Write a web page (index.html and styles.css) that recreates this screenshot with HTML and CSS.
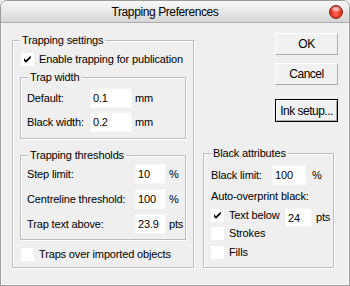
FILE: index.html
```html
<!DOCTYPE html>
<html>
<head>
<meta charset="utf-8">
<title>Trapping Preferences</title>
<link rel="stylesheet" href="styles.css">
</head>
<body>
<div class="window">
  <div class="titlebar">
    <span class="title">Trapping Preferences</span>
    <span class="close"></span>
  </div>
  <div class="content">
    <div class="group main">
      <span class="legend">Trapping settings</span>
      <div class="check-row first-check">
        <span class="cb"><svg viewBox="0 0 13 13" width="13" height="13"><path d="M3 5.3 L5 7.3 L9.8 2.5 L9.8 5 L5 9.8 L3 7.8 Z" fill="#000"/></svg></span>
        <span>Enable trapping for publication</span>
      </div>
      <div class="group sub width-group">
        <span class="legend">Trap width</span>
        <div class="field-row first-row">
          <span class="lbl lbl-w">Default:</span>
          <input class="inp inp-w" type="text" value="0.1" readonly>
          <span class="unit">mm</span>
        </div>
        <div class="field-row next-row">
          <span class="lbl lbl-w">Black width:</span>
          <input class="inp inp-w" type="text" value="0.2" readonly>
          <span class="unit">mm</span>
        </div>
      </div>
      <div class="group sub thresh-group">
        <span class="legend">Trapping thresholds</span>
        <div class="field-row thresh-first">
          <span class="lbl lbl-t">Step limit:</span>
          <input class="inp inp-t" type="text" value="10" readonly>
          <span class="unit">%</span>
        </div>
        <div class="field-row thresh-next">
          <span class="lbl lbl-t">Centreline threshold:</span>
          <input class="inp inp-t" type="text" value="100" readonly>
          <span class="unit">%</span>
        </div>
        <div class="field-row thresh-next">
          <span class="lbl lbl-t">Trap text above:</span>
          <input class="inp inp-t" type="text" value="23.9" readonly>
          <span class="unit">pts</span>
        </div>
      </div>
      <div class="check-row traps-check">
        <span class="cb"></span>
        <span>Traps over imported objects</span>
      </div>
    </div>
    <div class="right">
      <div class="btn">OK</div>
      <div class="btn btn-cancel">Cancel</div>
      <div class="btn btn-default">Ink setup...</div>
      <div class="group black-group">
        <span class="legend">Black attributes</span>
        <div class="field-row black-first">
          <span class="lbl lbl-b">Black limit:</span>
          <input class="inp inp-b" type="text" value="100" readonly>
          <span class="unit unit-b">%</span>
        </div>
        <div class="auto-label">Auto-overprint black:</div>
        <div class="text-below-row">
          <span class="cb cb-tb"><svg viewBox="0 0 13 13" width="13" height="13"><path d="M3 5.3 L5 7.3 L9.8 2.5 L9.8 5 L5 9.8 L3 7.8 Z" fill="#000"/></svg></span>
          <span class="tb-label">Text below</span>
          <input class="inp inp-tb" type="text" value="24" readonly>
          <span class="unit unit-tb">pts</span>
        </div>
        <div class="check-row black-check">
          <span class="cb"></span>
          <span>Strokes</span>
        </div>
        <div class="check-row black-check fills-check">
          <span class="cb"></span>
          <span>Fills</span>
        </div>
      </div>
    </div>
  </div>
</div>
</body>
</html>
```
FILE: styles.css
```css
* {
  box-sizing: border-box;
  margin: 0;
  padding: 0;
}

html, body {
  width: 350px;
  height: 286px;
  overflow: hidden;
}

body {
  font-family: "Liberation Sans", Arial, sans-serif;
  font-size: 11px;
  letter-spacing: -0.15px;
  color: #000;
  background: #efefef;
}

.window {
  width: 350px;
  height: 286px;
  border: 1px solid #9c9c9c;
  border-radius: 7px 7px 0 0;
  background: #efefef;
  display: flex;
  flex-direction: column;
  overflow: hidden;
  box-shadow: inset 1px 0 0 #fafafa, inset -1px -1px 0 #fafafa;
}

.titlebar {
  height: 22px;
  flex: none;
  display: flex;
  align-items: center;
  background: linear-gradient(#f9f9f9, #e9e9e9 45%, #d6d6d6);
  border-bottom: 1px solid #ababab;
}

.title {
  flex: 1;
  text-align: center;
  font-size: 12px;
  letter-spacing: -0.4px;
  line-height: 14px;
}

.close {
  width: 14px;
  height: 14px;
  margin-right: 6px;
  border-radius: 50%;
  border: 1px solid #8e1c12;
  background:
    radial-gradient(ellipse 55% 35% at 50% 25%, rgba(255,255,255,0.85), rgba(255,255,255,0) 100%),
    radial-gradient(circle at 50% 70%, #ff6a50 0%, #e0281a 50%, #a8120a 100%);
}

.content {
  flex: 1;
  display: flex;
  gap: 9px;
  padding: 10px 0 0 11px;
}

.group {
  border: 1px solid #bdbdbd;
  box-shadow: 1px 1px 0 #fff, inset 1px 1px 0 #fff;
  background: #efefef;
}

.legend {
  display: block;
  width: fit-content;
  height: 13px;
  line-height: 13px;
  margin: -7px 0 0 7px;
  padding: 0 2px;
  background: #efefef;
}

.main {
  width: 182px;
  height: 228px;
  margin-top: 7px;
  flex: none;
}

.check-row {
  display: flex;
  align-items: center;
  height: 13px;
  line-height: 13px;
}

.main > .check-row {
  margin-left: 8px;
}

.first-check {
  margin-top: 6px;
}

.traps-check {
  margin-top: 8px;
}

.cb {
  width: 13px;
  height: 13px;
  flex: none;
  background: #fff;
  margin-right: 5px;
  display: block;
}

.cb svg {
  display: block;
}

.sub {
  margin: 0 7px;
}

.width-group {
  margin-top: 11px;
  height: 62px;
}

.thresh-group {
  margin-top: 16px;
  height: 85px;
}

.field-row {
  display: flex;
  align-items: center;
  height: 20px;
  margin-left: 6px;
}

.first-row {
  margin-top: 4px;
}

.next-row {
  margin-top: 4px;
}

.thresh-first {
  margin-top: 2px;
}

.thresh-next {
  margin-top: 5px;
}

.lbl {
  flex: none;
  white-space: nowrap;
}

.lbl-w {
  width: 63px;
}

.lbl-t {
  width: 108px;
}

.lbl-b {
  width: 61px;
}

.inp {
  height: 20px;
  border: 1px solid #f6f6f6;
  background: #fff;
  font-family: inherit;
  font-size: 11px;
  letter-spacing: -0.15px;
  color: #000;
  padding: 0 0 0 2px;
  outline: none;
  flex: none;
}

.inp-w {
  width: 42px;
}

.inp-t {
  width: 31px;
}

.inp-b {
  width: 34px;
}

.unit {
  margin-left: 3px;
}

.unit-b {
  margin-left: 6px;
}

.right {
  width: 135px;
  flex: none;
  display: flex;
  flex-direction: column;
  align-items: flex-end;
}

.btn {
  width: 63px;
  height: 22px;
  flex: none;
  display: flex;
  align-items: center;
  justify-content: center;
  font-size: 12px;
  letter-spacing: -0.5px;
  background: #f1f1f1;
  border: 1px solid;
  border-color: #fff #a9a9a9 #a9a9a9 #fff;
}

.btn-cancel {
  margin-top: 8px;
}

.btn-default {
  margin-top: 14px;
  height: 23px;
  border: 1px solid #000;
  box-shadow: inset 1px 1px 0 #fff, inset -1px -1px 0 #a9a9a9;
}

.black-group {
  align-self: flex-start;
  width: 131px;
  height: 115px;
  margin-top: 31px;
}

.black-group .field-row,
.black-group .check-row,
.auto-label,
.text-below-row {
  margin-left: 7px;
}

.black-first {
  margin-top: 5px;
}

.auto-label {
  margin-top: 5px;
  height: 13px;
  line-height: 13px;
  white-space: nowrap;
}

.text-below-row {
  margin-top: 5px;
  height: 19px;
  display: flex;
  align-items: flex-start;
}

.cb-tb {
  margin-top: 1px;
}

.tb-label {
  width: 56px;
  flex: none;
  line-height: 13px;
  margin-top: 1px;
  white-space: nowrap;
}

.inp-tb {
  width: 27px;
  height: 19px;
}

.unit-tb {
  margin-left: 4px;
  line-height: 19px;
}

.black-check {
  margin-top: 0;
}

.fills-check {
  margin-top: 6px;
}
```
